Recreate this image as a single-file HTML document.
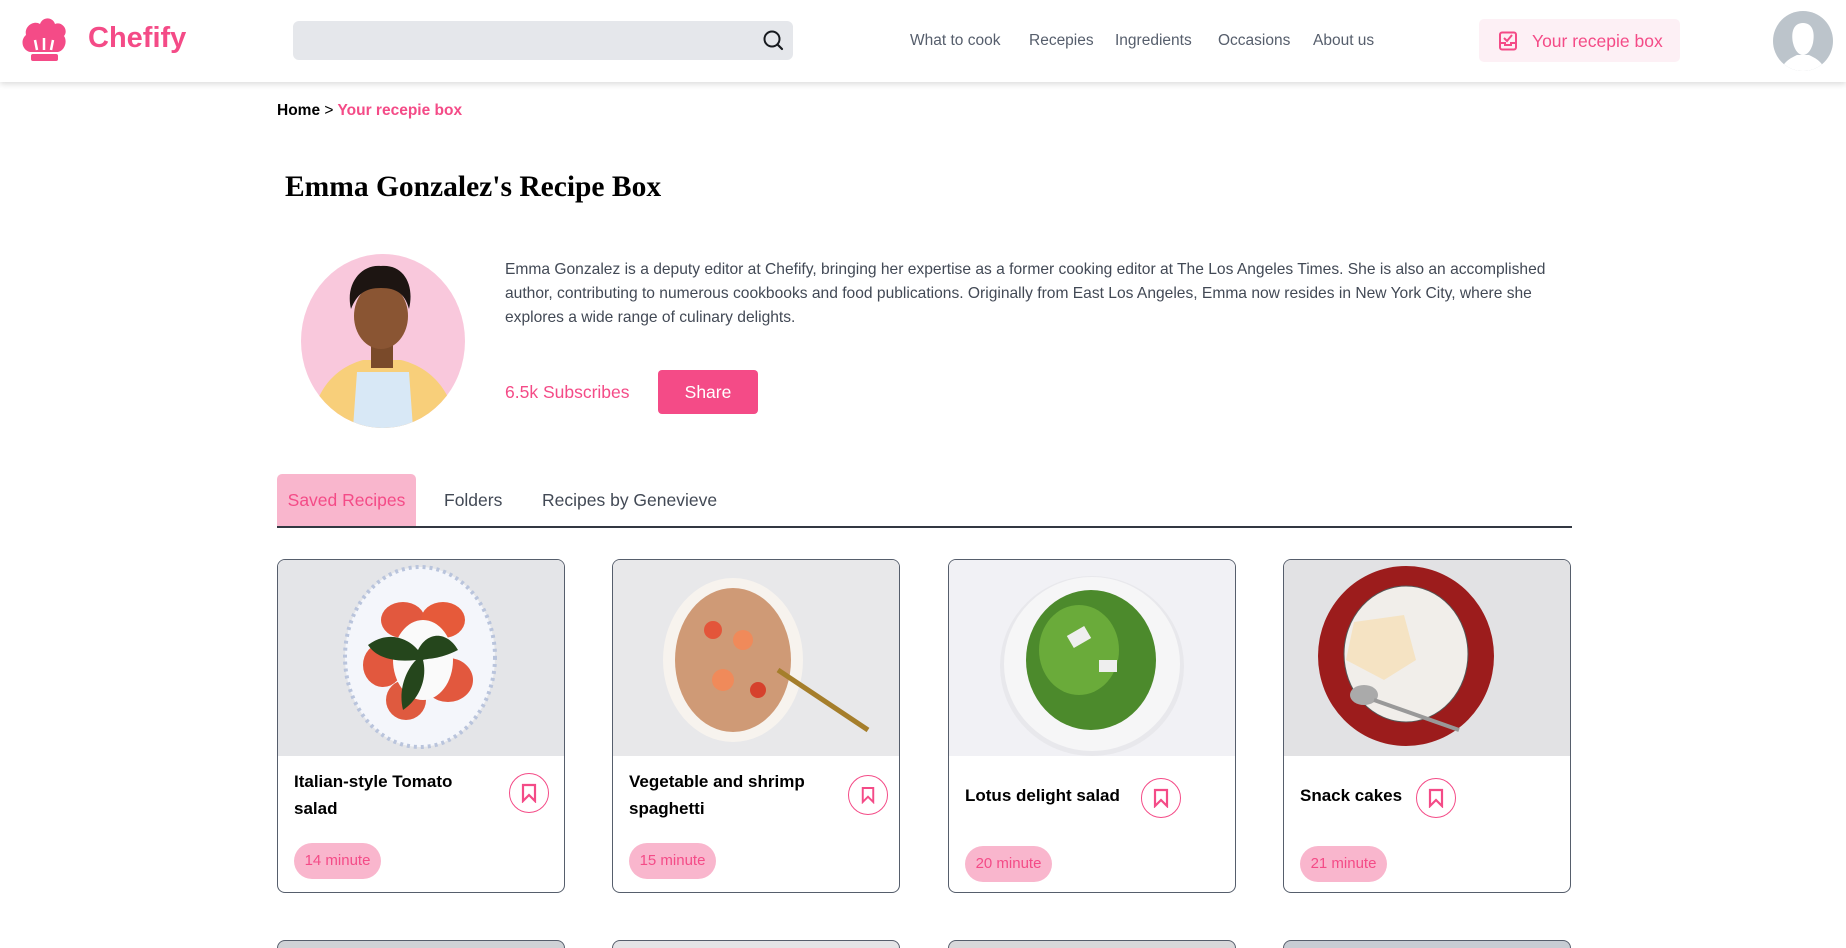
<!DOCTYPE html>
<html style="width:1846px;height:948px;overflow:hidden"><head><meta charset="utf-8"><style>
*{box-sizing:border-box;margin:0;padding:0}
body{width:1846px;height:948px;overflow:hidden;background:#fff;font-family:"Liberation Sans",sans-serif;position:relative}
.abs{position:absolute}
header{position:absolute;left:0;top:0;width:1846px;height:82px;background:#fff;box-shadow:0 2px 6px rgba(0,0,0,.15);z-index:2}
.nav{position:absolute;top:32px;font-size:15.5px;color:#565e6c}
.card{position:absolute;top:559px;width:288px;height:334px;border:1px solid #565e6c;border-radius:8px;overflow:hidden}
.img{position:absolute;left:0;top:0;width:100%;height:196px;overflow:hidden}
.ttl{position:absolute;left:16px;top:208px;font-weight:bold;font-size:17px;line-height:27px;color:#000}
.bm{position:absolute;width:40px;height:40px;border:1.3px solid #f44b87;border-radius:50%;display:flex;align-items:center;justify-content:center}
.pill{position:absolute;left:16px;width:87px;height:36px;border-radius:18px;background:#f9b6cd;color:#f44b87;font-size:15px;line-height:36px;text-align:center}
.card2{position:absolute;top:940px;width:288px;height:8px;border:1px solid #565e6c;border-bottom:none;border-radius:8px 8px 0 0;background:#cfd2d6}
</style></head><body>
<header>
<svg class="abs" style="left:20px;top:14px" width="48" height="48" viewBox="0 0 48 48"><path d="M10 38 C2 36 0 26 6 21 C4 12 14 6 20 10 C23 2 33 3 35 10 C42 7 49 16 44 22 C48 28 44 37 38 38 Z" fill="#f44b87"/><path d="M17 36 L15 26 M24 36 V24 M31 36 L33 26" stroke="#fff" stroke-width="2.5"/><rect x="11" y="40" width="27" height="7" rx="2" fill="#f44b87"/></svg>
<div class="abs" style="left:88px;top:22px;font-size:29px;font-weight:bold;color:#f44b87">Chefify</div>
<div class="abs" style="left:293px;top:21px;width:500px;height:39px;background:#e5e7eb;border-radius:6px"></div>
<svg class="abs" style="left:762px;top:29px" width="22" height="22" viewBox="0 0 22 22"><circle cx="10" cy="10" r="7.5" fill="none" stroke="#171a1f" stroke-width="2"/><path d="M15.5 15.5 L20 20" stroke="#171a1f" stroke-width="2.2" stroke-linecap="round"/></svg>
<div class="nav" style="left:910px">What to cook</div>
<div class="nav" style="left:1029px">Recepies</div>
<div class="nav" style="left:1115px">Ingredients</div>
<div class="nav" style="left:1218px">Occasions</div>
<div class="nav" style="left:1313px">About us</div>
<div class="abs" style="left:1479px;top:19px;width:201px;height:43px;background:#fdf0f5;border-radius:5px"></div>
<svg class="abs" style="left:1498px;top:31px" width="20" height="20" viewBox="0 0 20 20"><rect x="2" y="1.5" width="16" height="17" rx="2" fill="none" stroke="#f44b87" stroke-width="2"/><path d="M6 7 L9 10 L14 4" stroke="#f44b87" stroke-width="2" fill="none"/><path d="M2 12 H7 V14 H13 V12 H18" stroke="#f44b87" stroke-width="2" fill="none"/></svg>
<div class="abs" style="left:1532px;top:31px;font-size:17.5px;color:#f44b87">Your recepie box</div>
<svg class="abs" style="left:1773px;top:11px" width="60" height="60" viewBox="0 0 60 60"><defs><clipPath id="c"><circle cx="30" cy="30" r="30"/></clipPath></defs><g clip-path="url(#c)"><rect width="60" height="60" fill="#bcc4cb"/><path d="M30 12 C40 12 42 22 40 32 C38 40 34 44 30 44 C26 44 22 40 20 32 C18 22 20 12 30 12Z M8 60 C10 50 20 46 24 44 L36 44 C40 46 50 50 52 60Z" fill="#fff"/></g></svg>
</header>

<div class="abs" style="left:277px;top:102px;font-size:15.5px;font-weight:bold;color:#000">Home <span style="font-weight:normal">&gt;</span> <span style="color:#f44b87">Your recepie box</span></div>
<div class="abs" style="left:285px;top:171px;font-family:'Liberation Serif',serif;font-size:29.5px;font-weight:bold;color:#000">Emma Gonzalez's Recipe Box</div>

<svg class="abs" style="left:301px;top:254px" width="164" height="174" viewBox="0 0 164 174"><defs><clipPath id="p"><ellipse cx="82" cy="87" rx="82" ry="87"/></clipPath></defs><g clip-path="url(#p)"><rect width="164" height="174" fill="#f9c8dc"/><path d="M10 174 C14 130 40 112 62 106 L100 106 C124 112 150 130 156 174Z" fill="#f8cf7a"/><path d="M52 174 L56 118 L108 118 L112 174Z" fill="#d8e8f6"/><rect x="70" y="88" width="22" height="26" fill="#7a4a2a"/><ellipse cx="80" cy="62" rx="27" ry="33" fill="#8a5533"/><path d="M50 55 C44 30 60 10 80 12 C102 10 114 30 108 55 C104 40 96 34 80 34 C64 34 56 40 50 55Z" fill="#1d1512"/></g></svg>

<div class="abs" style="left:505px;top:258px;width:1070px;font-size:15.6px;line-height:24px;color:#424955">Emma Gonzalez is a deputy editor at Chefify, bringing her expertise as a former cooking editor at The Los Angeles Times. She is also an accomplished author, contributing to numerous cookbooks and food publications. Originally from East Los Angeles, Emma now resides in New York City, where she explores a wide range of culinary delights.</div>
<div class="abs" style="left:505px;top:382px;font-size:17.5px;color:#f44b87">6.5k Subscribes</div>
<div class="abs" style="left:658px;top:370px;width:100px;height:44px;background:#f44b87;border-radius:4px;color:#fff;font-size:17.5px;line-height:44px;text-align:center">Share</div>

<div class="abs" style="left:277px;top:474px;width:139px;height:52px;background:#f9b6cd;border-radius:5px 5px 0 0;color:#f44b87;font-size:17.5px;line-height:52px;text-align:center">Saved Recipes</div>
<div class="abs" style="left:444px;top:490px;font-size:17.5px;color:#424955">Folders</div>
<div class="abs" style="left:542px;top:490px;font-size:17.5px;color:#424955">Recipes by Genevieve</div>
<div class="abs" style="left:277px;top:526px;width:1295px;height:2px;background:#323842"></div>

<div class="card" style="left:277px">
<div class="img" style="background:#e4e5e8"><svg width="288" height="196"><ellipse cx="142" cy="97" rx="75" ry="90" fill="#f4f6fb" stroke="#b9c4dc" stroke-width="4" stroke-dasharray="3 4"/><ellipse cx="125" cy="60" rx="22" ry="18" fill="#e2583e"/><ellipse cx="165" cy="60" rx="22" ry="18" fill="#e65a3a"/><ellipse cx="105" cy="105" rx="20" ry="22" fill="#e2583e"/><ellipse cx="170" cy="120" rx="25" ry="22" fill="#e2583e"/><ellipse cx="128" cy="140" rx="20" ry="20" fill="#df5a3f"/><ellipse cx="145" cy="100" rx="30" ry="40" fill="#fafafa"/><path d="M90 85 C110 70 130 78 140 90 C150 70 170 72 180 90 C160 100 150 98 145 100 C150 120 140 140 125 150 C120 130 128 110 138 100 C120 102 100 100 90 85Z" fill="#25461c"/></svg></div>
<div class="ttl">Italian-style Tomato<br>salad</div>
<div class="bm" style="left:231px;top:213px"><svg width="16" height="20" viewBox="0 0 16 20"><path d="M2 2 H14 V18 L8 12 L2 18Z" fill="none" stroke="#f44b87" stroke-width="2.2"/></svg></div>
<div class="pill" style="top:283px">14 minute</div>
</div>

<div class="card" style="left:612px">
<div class="img" style="background:#e8e8ea"><svg width="288" height="196"><ellipse cx="120" cy="100" rx="70" ry="82" fill="#f7f3ee"/><ellipse cx="120" cy="100" rx="58" ry="72" fill="#cf9a76"/><circle cx="100" cy="70" r="9" fill="#e3553a"/><circle cx="130" cy="80" r="10" fill="#f08a5a"/><circle cx="110" cy="120" r="11" fill="#f08a5a"/><circle cx="145" cy="130" r="8" fill="#d6412c"/><path d="M165 110 L255 170" stroke="#a57e2b" stroke-width="5"/></svg></div>
<div class="ttl">Vegetable and shrimp<br>spaghetti</div>
<div class="bm" style="left:235px;top:215px"><svg width="14" height="18" viewBox="0 0 16 20"><path d="M2 2 H14 V18 L8 12 L2 18Z" fill="none" stroke="#f44b87" stroke-width="2.2"/></svg></div>
<div class="pill" style="top:283px">15 minute</div>
</div>

<div class="card" style="left:948px">
<div class="img" style="background:#f1f1f5"><svg width="288" height="196"><ellipse cx="143" cy="106" rx="92" ry="90" fill="#e8e8ec"/><ellipse cx="143" cy="104" rx="88" ry="87" fill="#f6f6f7"/><ellipse cx="142" cy="100" rx="65" ry="70" fill="#4c8a2c"/><ellipse cx="130" cy="90" rx="40" ry="45" fill="#6aab3a"/><rect x="120" y="70" width="20" height="14" fill="#eee" transform="rotate(-30 130 77)"/><rect x="150" y="100" width="18" height="12" fill="#eee"/></svg></div>
<div class="ttl" style="top:222px">Lotus delight salad</div>
<div class="bm" style="left:192px;top:218px"><svg width="16" height="20" viewBox="0 0 16 20"><path d="M2 2 H14 V18 L8 12 L2 18Z" fill="none" stroke="#f44b87" stroke-width="2.2"/></svg></div>
<div class="pill" style="top:286px">20 minute</div>
</div>

<div class="card" style="left:1283px">
<div class="img" style="background:#e2e2e4"><svg width="288" height="196"><ellipse cx="122" cy="96" rx="88" ry="90" fill="#9c1c1c"/><ellipse cx="122" cy="94" rx="62" ry="68" fill="#f1eeea" stroke="#555" stroke-width="1"/><path d="M70 62 L120 55 L132 100 L100 120 L62 100Z" fill="#f5e3c3"/><ellipse cx="80" cy="135" rx="14" ry="10" fill="#aaa"/><path d="M90 140 L175 170" stroke="#999" stroke-width="4"/></svg></div>
<div class="ttl" style="top:222px">Snack cakes</div>
<div class="bm" style="left:132px;top:218px"><svg width="16" height="20" viewBox="0 0 16 20"><path d="M2 2 H14 V18 L8 12 L2 18Z" fill="none" stroke="#f44b87" stroke-width="2.2"/></svg></div>
<div class="pill" style="top:286px">21 minute</div>
</div>

<div class="card2" style="left:277px"></div>
<div class="card2" style="left:612px;background:#e4e4e6"></div>
<div class="card2" style="left:948px;background:#d8d8da"></div>
<div class="card2" style="left:1283px;background:#c7ccd3"></div>
</body></html>
